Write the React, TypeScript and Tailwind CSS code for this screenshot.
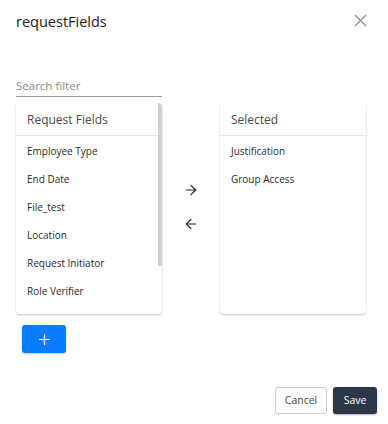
import React from "react";
import { X, ArrowRight, ArrowLeft, Plus } from "lucide-react";

const available = [
  "Employee Type",
  "End Date",
  "File_test",
  "Location",
  "Request Initiator",
  "Role Verifier",
];

const selected = ["Justification", "Group Access"];

const ListCard: React.FC<{ title: string; items: string[]; scroll?: boolean }> = ({
  title,
  items,
  scroll,
}) => {
  return (
    <div className="relative w-[146px] h-[211px] rounded bg-white shadow-[0_1px_2px_rgba(0,0,0,0.25)] overflow-hidden">
      <div className="h-[33px] flex items-center pt-[1px] px-[11px] border-b border-[#e8e8e8] text-[12px] text-[#4a4a4a]">
        {title}
      </div>
      <div className="pt-[1px]">
        {items.map((item) => (
          <div key={item} className="h-[28px] flex items-center px-[11px] text-[10px] text-[#2a2a2a]">
            {item}
          </div>
        ))}
      </div>
      {scroll && (
        <div className="absolute right-0 top-0 w-[4.5px] h-[163px] bg-[#ccd2dc]" />
      )}
    </div>
  );
};

export default function App() {
  return (
    <div
      className="w-[388px] h-[424px] bg-white relative"
      style={{ fontFamily: '"Open Sans", "Noto Sans", sans-serif' }}
    >
      <div className="flex items-start justify-between pl-[16px] pr-[17px] pt-[11px]">
        <h1 className="text-[14.5px] text-[#1a1a1a] leading-[22px]">requestFields</h1>
        <X className="w-[21px] h-[21px] text-[#888] -mt-[1px]" strokeWidth={1.3} />
      </div>

      <div className="px-[16px] mt-[44px]">
        <div className="w-[146px] border-b border-[#999] pb-[1px] text-[11.5px] text-[#888] leading-[18px]">
          Search filter
        </div>
      </div>

      <div className="flex items-start px-[16px] mt-[6px]">
        <ListCard title="Request Fields" items={available} scroll />
        <div className="w-[58px] flex flex-col items-center pt-[79px] gap-[18px] text-[#222]">
          <ArrowRight className="w-[16px] h-[16px]" strokeWidth={1.7} />
          <ArrowLeft className="w-[16px] h-[16px]" strokeWidth={1.7} />
        </div>
        <ListCard title="Selected" items={selected} />
      </div>

      <div className="px-[22px] mt-[11px]">
        <button className="w-[44px] h-[28px] rounded-[3px] bg-[#0a7cff] text-white flex items-center justify-center shadow-[0_1px_2px_rgba(0,0,0,0.25)]">
          <Plus className="w-[17px] h-[17px]" strokeWidth={1.6} />
        </button>
      </div>

      <div className="flex justify-end gap-[6px] pr-[11px] mt-[34px]">
        <button className="w-[52px] h-[27px] rounded-[3px] border border-[#c8ccd2] bg-white text-[10.5px] text-[#444]">
          Cancel
        </button>
        <button className="w-[44px] h-[27px] rounded-[3px] bg-[#2d3648] text-[10.5px] text-white shadow-[0_1px_2px_rgba(0,0,0,0.3)]">
          Save
        </button>
      </div>
    </div>
  );
}
